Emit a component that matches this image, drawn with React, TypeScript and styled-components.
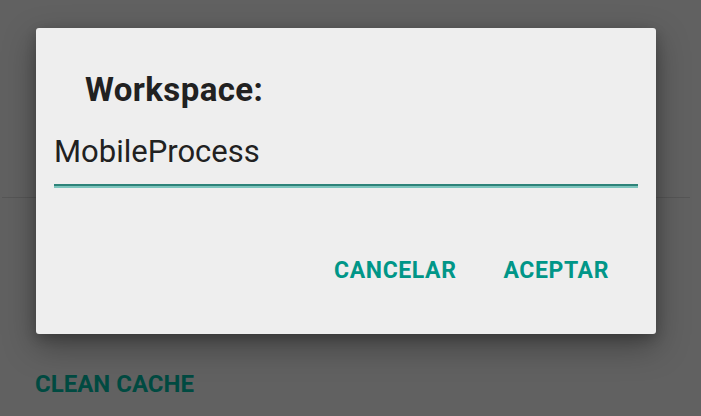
import React, { useState } from 'react';
import styled, { createGlobalStyle } from 'styled-components';

const GlobalStyle = createGlobalStyle`
    html, body {
        margin: 0;
        padding: 0;
        width: 701px;
        height: 416px;
        overflow: hidden;
        background: #616161;
        font-family: Roboto, "Noto Sans", sans-serif;
    }
`;

const Screen = styled.div`
    position: relative;
    width: 701px;
    height: 416px;
    background: #616161;
    overflow: hidden;
`;

const Settings = styled.div`
    display: flex;
    flex-direction: column;
    padding-top: 197px;
`;

const Divider = styled.div`
    height: 1px;
    margin: 0 11px 0 2px;
    background: #565656;
`;

const CleanButton = styled.div`
    margin: 171px 0 0 35px;
    font-size: 24px;
    font-weight: 700;
    line-height: 30px;
    color: #004a41;
`;

const Dialog = styled.div`
    position: absolute;
    left: 36px;
    top: 28px;
    width: 620px;
    height: 306px;
    box-sizing: border-box;
    display: flex;
    flex-direction: column;
    background: #eeeeee;
    border-radius: 3px;
    box-shadow: 0 12px 32px rgba(0, 0, 0, 0.34), 0 4px 12px rgba(0, 0, 0, 0.2);
    padding: 40px 18px 0 18px;
`;

const Title = styled.h2`
    margin: 0 0 0 31px;
    font-size: 33px;
    font-weight: 700;
    letter-spacing: 0.4px;
    line-height: 44px;
    color: #212121;
`;

const Field = styled.input`
    margin-top: 22px;
    padding: 0 0 14px 0;
    border: none;
    border-bottom: 2px solid #2e8379;
    box-shadow: 0 2px 0 #7dc5bd;
    background: transparent;
    outline: none;
    font-family: inherit;
    font-size: 31px;
    line-height: 36px;
    color: #212121;
`;

const Actions = styled.div`
    display: flex;
    justify-content: flex-end;
    gap: 47px;
    margin-top: 71px;
    padding-right: 29px;
`;

const ActionButton = styled.button`
    border: none;
    background: none;
    padding: 0;
    font-family: inherit;
    font-size: 23px;
    font-weight: 700;
    letter-spacing: 0.6px;
    line-height: 28px;
    color: #009688;
    cursor: pointer;
`;

export default function App() {
    const [workspace, setWorkspace] = useState('MobileProcess');

    return (
        <Screen>
            <GlobalStyle />
            <Settings>
                <Divider />
                <CleanButton>CLEAN CACHE</CleanButton>
            </Settings>
            <Dialog>
                <Title>Workspace:</Title>
                <Field value={workspace} onChange={e => setWorkspace(e.target.value)} />
                <Actions>
                    <ActionButton>CANCELAR</ActionButton>
                    <ActionButton>ACEPTAR</ActionButton>
                </Actions>
            </Dialog>
        </Screen>
    );
}
